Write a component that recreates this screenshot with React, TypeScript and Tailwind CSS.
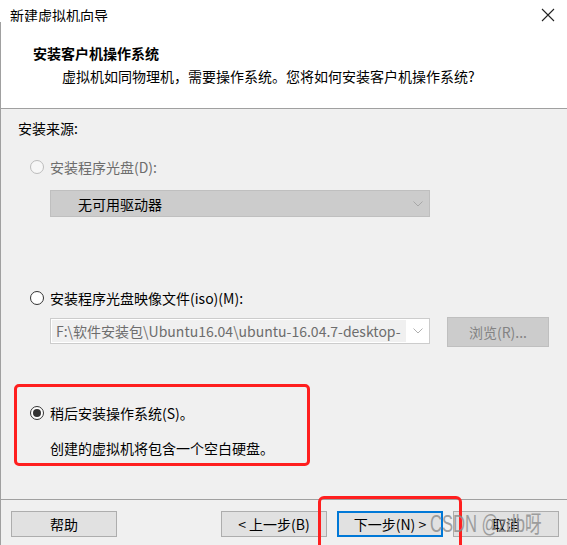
import React from "react";

const Radio = ({ checked = false, disabled = false }: { checked?: boolean; disabled?: boolean }) => (
  <span
    className={
      "flex h-[14px] w-[14px] shrink-0 items-center justify-center rounded-full border " +
      (disabled ? "border-[#bcbcbc] bg-[#f7f7f7]" : "border-[#333333] bg-white")
    }
  >
    {checked && <span className="block h-[8px] w-[8px] rounded-full bg-[#333333]" />}
  </span>
);

const Chevron = ({ color }: { color: string }) => (
  <svg width="10" height="6" viewBox="0 0 10 6" className="shrink-0">
    <path d="M0.5 0.5 L5 5 L9.5 0.5" fill="none" stroke={color} strokeWidth="1" />
  </svg>
);

export default function App() {
  return (
    <div className="relative h-[545px] w-[567px] overflow-hidden bg-[#f0f0f0] font-['Noto_Sans_CJK_SC',sans-serif] text-[14px] leading-[20px] text-black">
      {/* title bar */}
      <div className="flex h-[22px] items-start justify-between bg-white pl-[10px] pr-[12px]">
        <span className="pt-[5px] leading-[20px]">新建虚拟机向导</span>
        <svg width="14" height="14" viewBox="0 0 14 14" className="mt-[8px]">
          <path d="M1 1 L13 13 M13 1 L1 13" stroke="#222" strokeWidth="1.1" />
        </svg>
      </div>

      <div className="flex h-[523px] flex-col border-l border-[#a0a0a0]">
        {/* header */}
        <div className="h-[87px] shrink-0 border-b border-[#a0a0a0] bg-white pt-[21px]">
          <div className="pl-[32px] font-bold">安装客户机操作系统</div>
          <div className="mt-[3px] pl-[61px]">虚拟机如同物理机，需要操作系统。您将如何安装客户机操作系统?</div>
        </div>

        {/* content */}
        <div className="flex flex-col">
          <div className="mt-[9px] pl-[17px]">安装来源:</div>

          <div className="mt-[19px] flex items-center gap-[6px] pl-[29px] text-[#6d6d6d]">
            <Radio disabled />
            <span>安装程序光盘(D):</span>
          </div>

          <div className="ml-[49px] mt-[13px] flex h-[27px] w-[380px] items-center justify-between border border-[#bfbfbf] bg-[#cccccc] pl-[27px] pr-[6px]">
            <span>无可用驱动器</span>
            <Chevron color="#a8a8a8" />
          </div>

          <div className="mt-[71px] flex items-center gap-[6px] pl-[29px]">
            <Radio />
            <span>安装程序光盘映像文件(iso)(M):</span>
          </div>

          <div className="mt-[9px] flex items-start pl-[49px]">
            <div className="mt-[1px] flex h-[26px] w-[380px] items-center border border-[#cccccc] bg-white pl-[1px] pr-[6px]">
              <div className="flex h-[22px] w-[354px] items-center overflow-hidden whitespace-nowrap bg-[#f0f0f0] pl-[4px] text-[#6d6d6d]">
                F:\软件安装包\Ubuntu16.04\ubuntu-16.04.7-desktop-
              </div>
              <div className="flex flex-1 justify-end">
                <Chevron color="#b0b0b0" />
              </div>
            </div>
            <div className="ml-[17px] flex h-[30px] w-[102px] items-center justify-center border border-[#bfbfbf] bg-[#cccccc] text-[#838383]">
              浏览(R)...
            </div>
          </div>

          {/* highlighted option */}
          <div className="ml-[13px] mt-[37px] h-[82px] w-[296px] rounded-[5px] border-[3px] border-[#ff1f1f] pt-[16px]">
            <div className="flex items-center gap-[6px] pl-[13px]">
              <Radio checked />
              <span>稍后安装操作系统(S)。</span>
            </div>
            <div className="mt-[15px] pl-[33px]">创建的虚拟机将包含一个空白硬盘。</div>
          </div>

          {/* footer */}
          <div className="mt-[33px] border-t border-[#a0a0a0]" />
          <div className="mt-[11px] flex items-center pl-[10px]">
            <div className="flex h-[26px] w-[106px] items-center justify-center border border-[#adadad] bg-[#e1e1e1]">帮助</div>
            <div className="ml-[104px] flex h-[26px] w-[106px] items-center justify-center border border-[#adadad] bg-[#e1e1e1]">&lt; 上一步(B)</div>
            <div className="ml-[10px] flex h-[26px] w-[106px] items-center justify-center border-2 border-[#0078d7] bg-[#e1e1e1]">下一步(N) &gt;</div>
            <div className="ml-[10px] flex h-[26px] w-[106px] items-center justify-center border border-[#adadad] bg-[#e1e1e1]">取消</div>
          </div>
        </div>
      </div>

      {/* annotation box */}
      <div className="absolute left-[318px] top-[496px] h-[60px] w-[144px] rounded-[6px] border-[3px] border-[#ff1f1f]" />

      {/* watermark */}
      <div className="pointer-events-none absolute left-[430px] top-[510px] origin-left scale-x-[0.72] whitespace-nowrap font-['Liberation_Sans','Noto_Sans_CJK_SC',sans-serif] text-[23px] leading-[28px] text-[#8c8c8c] opacity-80">
        CSDN @zdb呀
      </div>
    </div>
  );
}
